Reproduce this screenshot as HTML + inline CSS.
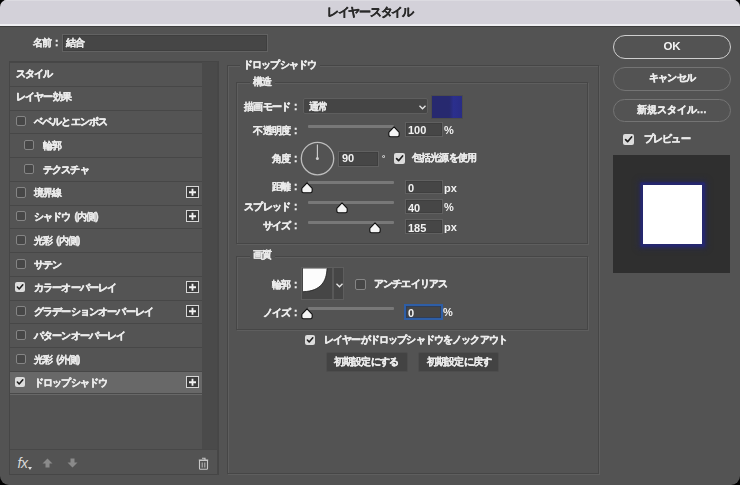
<!DOCTYPE html><html><head><meta charset="utf-8"><style>
*{box-sizing:border-box}
html,body{margin:0;padding:0;width:740px;height:485px;overflow:hidden;background:#000}
body{font-family:"Liberation Sans",sans-serif;color:#ebebeb;font-weight:bold}
.a{position:absolute}
#win{position:absolute;left:0;top:0;width:740px;height:485px;background:#535353;border-radius:7px 7px 9px 9px;overflow:hidden}
.t{position:absolute;white-space:nowrap;font-size:10px;line-height:12px;letter-spacing:-0.85px;-webkit-text-stroke-width:0.4px;will-change:transform}
.r{text-align:right}
.k{-webkit-text-stroke-width:0.15px}
.cb{position:absolute;width:10px;height:10px;border:1.4px solid #858585;background:#474747;border-radius:2px}
.cbc{position:absolute;width:11px;height:11px;background:#dcdcdc;border-radius:2px}
.plus{position:absolute;width:13px;height:12.5px;border:1.3px solid #d6d6d6;background:#3c3c3c}
.trk{position:absolute;left:308px;width:86px;height:2.5px;background:#787878;border-radius:1px}
.inp{position:absolute;background:#464646;border:1.3px solid #606060;box-shadow:inset 0 0 0 0.8px #3e3e3e}
.num{position:absolute;white-space:nowrap;font-size:11px;line-height:12px;color:#f2f2f2;will-change:transform}
.btn{position:absolute;left:613px;width:118px;height:23.8px;border-radius:12px;border:1.5px solid #747474}
</style></head><body><div id="win">
<div class="a" style="left:0;top:0;width:740px;height:24px;background:#d3d1d9;border-top:1px solid #dcdbe1"></div>
<div class="a" style="left:0;top:24px;width:740px;height:1.5px;background:#efeff2"></div>
<div class="a" style="left:0;top:25.5px;width:740px;height:1.5px;background:#3d3d3d"></div>
<div class="t" style="left:327px;top:6px;font-size:11.5px;letter-spacing:-1.3px;color:#2a2a2a;">レイヤースタイル</div>
<div class="t" style="left:33px;top:37px;"><span class="k">名前</span></div>
<div class="t" style="left:55px;top:37px;">:</div>
<div class="inp" style="left:61.5px;top:34px;width:206.5px;height:17.8px;border:1.6px solid #626262;box-shadow:inset 0 0 0 1px #3f3f3f"></div>
<div class="t" style="left:66px;top:36.5px;"><span class="k">結合</span></div>
<div class="a" style="left:9px;top:61px;width:210px;height:414px;border:1px solid #464646"></div>
<div class="a" style="left:201.5px;top:62px;width:15.5px;height:387px;background:#4a4a4a"></div>
<div class="a" style="left:217px;top:61px;width:1px;height:414px;background:#474747"></div>
<div class="a" style="left:10px;top:449px;width:207px;height:1px;background:#484848"></div>
<div class="a" style="left:10px;top:62.00px;width:191.5px;height:23.75px;background:#545454;border-top:1.3px solid #474747"></div>
<div class="t" style="left:16px;top:67.6px;">スタイル</div>
<div class="a" style="left:10px;top:85.75px;width:191.5px;height:23.75px;background:#545454;border-top:1.3px solid #474747"></div>
<div class="t" style="left:16px;top:91.35px;">レイヤー<span class="k">効果</span></div>
<div class="a" style="left:10px;top:109.50px;width:191.5px;height:23.75px;background:#545454;border-top:1.3px solid #474747"></div>
<div class="cb" style="left:15.6px;top:116.0px;width:10.4px;height:10.4px"></div>
<div class="t" style="left:34px;top:116.1px;">ベベルとエンボス</div>
<div class="a" style="left:10px;top:133.25px;width:191.5px;height:23.75px;background:#545454;border-top:1.3px solid #474747"></div>
<div class="cb" style="left:24.1px;top:139.75px;width:10.4px;height:10.4px"></div>
<div class="t" style="left:43px;top:139.85px;"><span class="k">輪郭</span></div>
<div class="a" style="left:10px;top:157.00px;width:191.5px;height:23.75px;background:#545454;border-top:1.3px solid #474747"></div>
<div class="cb" style="left:24.1px;top:163.5px;width:10.4px;height:10.4px"></div>
<div class="t" style="left:43px;top:163.6px;">テクスチャ</div>
<div class="a" style="left:10px;top:180.75px;width:191.5px;height:23.75px;background:#545454;border-top:1.3px solid #474747"></div>
<div class="cb" style="left:15.6px;top:187.25px;width:10.4px;height:10.4px"></div>
<div class="t" style="left:34px;top:187.35px;"><span class="k">境界線</span></div>
<div class="plus" style="left:186px;top:185.75px"></div>
<svg class="a" style="left:186px;top:185.75px" width="13" height="12.5" viewBox="0 0 13 12.5"><path d="M6.5 2.8 V9.7 M3 6.25 H10" stroke="#f0f0f0" stroke-width="1.8"/></svg>
<div class="a" style="left:10px;top:204.50px;width:191.5px;height:23.75px;background:#545454;border-top:1.3px solid #474747"></div>
<div class="cb" style="left:15.6px;top:211.0px;width:10.4px;height:10.4px"></div>
<div class="t" style="left:34px;top:211.1px;">シャドウ<span style="margin-left:2px"></span> (<span class="k">内側</span>)</div>
<div class="plus" style="left:186px;top:209.5px"></div>
<svg class="a" style="left:186px;top:209.5px" width="13" height="12.5" viewBox="0 0 13 12.5"><path d="M6.5 2.8 V9.7 M3 6.25 H10" stroke="#f0f0f0" stroke-width="1.8"/></svg>
<div class="a" style="left:10px;top:228.25px;width:191.5px;height:23.75px;background:#545454;border-top:1.3px solid #474747"></div>
<div class="cb" style="left:15.6px;top:234.75px;width:10.4px;height:10.4px"></div>
<div class="t" style="left:34px;top:234.85px;"><span class="k">光彩</span><span style="margin-left:2px"></span> (<span class="k">内側</span>)</div>
<div class="a" style="left:10px;top:252.00px;width:191.5px;height:23.75px;background:#545454;border-top:1.3px solid #474747"></div>
<div class="cb" style="left:15.6px;top:258.5px;width:10.4px;height:10.4px"></div>
<div class="t" style="left:34px;top:258.6px;">サテン</div>
<div class="a" style="left:10px;top:275.75px;width:191.5px;height:23.75px;background:#545454;border-top:1.3px solid #474747"></div>
<div class="cbc" style="left:15.3px;top:282.15000000000003px;width:10px;height:10px"></div>
<svg class="a" style="left:15.3px;top:282.15000000000003px" width="10" height="10" viewBox="0 0 11 11"><path d="M2.6 5.6 L4.6 7.7 L8.6 3" fill="none" stroke="#1e1e1e" stroke-width="1.7" stroke-linecap="round" stroke-linejoin="round"/></svg>
<div class="t" style="left:34px;top:282.35px;">カラーオーバーレイ</div>
<div class="plus" style="left:186px;top:280.75px"></div>
<svg class="a" style="left:186px;top:280.75px" width="13" height="12.5" viewBox="0 0 13 12.5"><path d="M6.5 2.8 V9.7 M3 6.25 H10" stroke="#f0f0f0" stroke-width="1.8"/></svg>
<div class="a" style="left:10px;top:299.50px;width:191.5px;height:23.75px;background:#545454;border-top:1.3px solid #474747"></div>
<div class="cb" style="left:15.6px;top:306.0px;width:10.4px;height:10.4px"></div>
<div class="t" style="left:34px;top:306.1px;">グラデーションオーバーレイ</div>
<div class="plus" style="left:186px;top:304.5px"></div>
<svg class="a" style="left:186px;top:304.5px" width="13" height="12.5" viewBox="0 0 13 12.5"><path d="M6.5 2.8 V9.7 M3 6.25 H10" stroke="#f0f0f0" stroke-width="1.8"/></svg>
<div class="a" style="left:10px;top:323.25px;width:191.5px;height:23.75px;background:#545454;border-top:1.3px solid #474747"></div>
<div class="cb" style="left:15.6px;top:329.75px;width:10.4px;height:10.4px"></div>
<div class="t" style="left:34px;top:329.85px;">パターンオーバーレイ</div>
<div class="a" style="left:10px;top:347.00px;width:191.5px;height:23.75px;background:#545454;border-top:1.3px solid #474747"></div>
<div class="cb" style="left:15.6px;top:353.5px;width:10.4px;height:10.4px"></div>
<div class="t" style="left:34px;top:353.6px;"><span class="k">光彩</span><span style="margin-left:2px"></span> (<span class="k">外側</span>)</div>
<div class="a" style="left:10px;top:370.75px;width:191.5px;height:23.75px;background:#686868;border-top:1.3px solid #474747"></div>
<div class="cbc" style="left:15.3px;top:377.15000000000003px;width:10px;height:10px"></div>
<svg class="a" style="left:15.3px;top:377.15000000000003px" width="10" height="10" viewBox="0 0 11 11"><path d="M2.6 5.6 L4.6 7.7 L8.6 3" fill="none" stroke="#1e1e1e" stroke-width="1.7" stroke-linecap="round" stroke-linejoin="round"/></svg>
<div class="t" style="left:34px;top:377.35px;">ドロップシャドウ</div>
<div class="plus" style="left:186px;top:375.75px"></div>
<svg class="a" style="left:186px;top:375.75px" width="13" height="12.5" viewBox="0 0 13 12.5"><path d="M6.5 2.8 V9.7 M3 6.25 H10" stroke="#f0f0f0" stroke-width="1.8"/></svg>
<div class="a" style="left:10px;top:393.2px;width:191.5px;height:1.3px;background:#4a4a4a"></div>
<div class="a" style="left:17.5px;top:455.5px;font-family:'Liberation Sans',sans-serif;font-style:italic;font-weight:normal;font-size:14px;line-height:14px;color:#d8d8d8;letter-spacing:-0.3px">fx</div>
<svg class="a" style="left:28px;top:467px" width="4" height="3"><path d="M0 0 H4 L2 3Z" fill="#ddd"/></svg>
<svg class="a" style="left:42px;top:458px" width="11" height="10" viewBox="0 0 11 10"><path d="M5.5 0.5 L10.5 5.5 H7.5 V9.5 H3.5 V5.5 H0.5Z" fill="#8a8a8a"/></svg>
<svg class="a" style="left:67px;top:458px" width="11" height="10" viewBox="0 0 11 10"><path d="M3.5 0.5 H7.5 V4.5 H10.5 L5.5 9.5 L0.5 4.5 H3.5Z" fill="#8a8a8a"/></svg>
<svg class="a" style="left:198px;top:456.5px" width="11" height="13" viewBox="0 0 11 13"><path d="M1.5 3.5 H9.5 V11.5 Q9.5 12.3 8.7 12.3 H2.3 Q1.5 12.3 1.5 11.5Z M4 1.2 H7 V3 M0.8 3 H10.2" fill="none" stroke="#c8c8c8" stroke-width="1.1"/><path d="M4.2 5.5 V10.5 M6.8 5.5 V10.5" stroke="#c8c8c8" stroke-width="0.9"/></svg>
<div class="a" style="left:226.5px;top:65px;width:372px;height:409px;border:1px solid #464646;box-shadow:1px 1px 0 #5e5e5e, inset 1px 1px 0 #5e5e5e"></div>
<div class="a" style="left:240px;top:57.5px;width:80px;height:14px;background:#535353"></div>
<div class="t" style="left:243px;top:58.5px;">ドロップシャドウ</div>
<div class="a" style="left:235.5px;top:82px;width:352.5px;height:161.5px;border:1px solid #464646;box-shadow:1px 1px 0 #5e5e5e, inset 1px 1px 0 #5e5e5e"></div>
<div class="a" style="left:250px;top:74.5px;width:25px;height:14px;background:#535353"></div>
<div class="t" style="left:253px;top:75.5px;"><span class="k">構造</span></div>
<div class="a" style="left:235.5px;top:255.5px;width:352.5px;height:74px;border:1px solid #464646;box-shadow:1px 1px 0 #5e5e5e, inset 1px 1px 0 #5e5e5e"></div>
<div class="a" style="left:250px;top:248px;width:25px;height:14px;background:#535353"></div>
<div class="t" style="left:253px;top:249px;"><span class="k">画質</span></div>
<div class="t r" style="left:170.0px;width:120px;top:101px"><span class="k">描画</span>モード</div>
<div class="t" style="left:293.7px;top:101px">:</div>
<div class="t r" style="left:170.0px;width:120px;top:124.5px"><span class="k">不透明度</span></div>
<div class="t" style="left:293.7px;top:124.5px">:</div>
<div class="t r" style="left:170.0px;width:120px;top:153.3px"><span class="k">角度</span></div>
<div class="t" style="left:293.7px;top:153.3px">:</div>
<div class="t r" style="left:170.0px;width:120px;top:181.4px"><span class="k">距離</span></div>
<div class="t" style="left:293.7px;top:181.4px">:</div>
<div class="t r" style="left:170.0px;width:120px;top:200.7px">スプレッド</div>
<div class="t" style="left:293.7px;top:200.7px">:</div>
<div class="t r" style="left:170.0px;width:120px;top:219.6px">サイズ</div>
<div class="t" style="left:293.7px;top:219.6px">:</div>
<div class="t r" style="left:170.0px;width:120px;top:279.3px"><span class="k">輪郭</span></div>
<div class="t" style="left:293.7px;top:279.3px">:</div>
<div class="t r" style="left:170.0px;width:120px;top:307.4px">ノイズ</div>
<div class="t" style="left:293.7px;top:307.4px">:</div>
<div class="a" style="left:302.5px;top:97.5px;width:125px;height:16.5px;background:#454545;border:1.4px solid #5e5e5e;border-radius:2px"></div>
<div class="t" style="left:309px;top:100.5px;"><span class="k">通常</span></div>
<svg class="a" style="left:418px;top:104px" width="9" height="7" viewBox="0 0 9 7"><path d="M1.5 1.8 L4.5 4.8 L7.5 1.8" fill="none" stroke="#e6e6e6" stroke-width="1.3"/></svg>
<div class="a" style="left:430.5px;top:95px;width:32px;height:23.5px;background:linear-gradient(to right,#27296f 0%,#27296f 58%,#2b2f8e 72%,#292c84 100%);border:1px solid #4c4c4c"></div>
<div class="trk" style="top:125.25px"></div>
<div class="trk" style="top:181.35px"></div>
<div class="trk" style="top:201.25px"></div>
<div class="trk" style="top:221.25px"></div>
<div class="trk" style="top:307.25px"></div>
<svg class="a" style="left:386.9px;top:125.0px" width="14" height="14" viewBox="0 0 14 14"><path d="M7 1.8 L12.2 7.4 V10 Q12.2 11.7 10.5 11.7 H3.5 Q1.8 11.7 1.8 10 V7.4 Z" fill="#f4f4f4" stroke="#111" stroke-width="1.15" stroke-linejoin="round"/></svg>
<svg class="a" style="left:299.9px;top:181.1px" width="14" height="14" viewBox="0 0 14 14"><path d="M7 1.8 L12.2 7.4 V10 Q12.2 11.7 10.5 11.7 H3.5 Q1.8 11.7 1.8 10 V7.4 Z" fill="#f4f4f4" stroke="#111" stroke-width="1.15" stroke-linejoin="round"/></svg>
<svg class="a" style="left:334.9px;top:201.0px" width="14" height="14" viewBox="0 0 14 14"><path d="M7 1.8 L12.2 7.4 V10 Q12.2 11.7 10.5 11.7 H3.5 Q1.8 11.7 1.8 10 V7.4 Z" fill="#f4f4f4" stroke="#111" stroke-width="1.15" stroke-linejoin="round"/></svg>
<svg class="a" style="left:367.59999999999997px;top:221.0px" width="14" height="14" viewBox="0 0 14 14"><path d="M7 1.8 L12.2 7.4 V10 Q12.2 11.7 10.5 11.7 H3.5 Q1.8 11.7 1.8 10 V7.4 Z" fill="#f4f4f4" stroke="#111" stroke-width="1.15" stroke-linejoin="round"/></svg>
<svg class="a" style="left:299.9px;top:307.0px" width="14" height="14" viewBox="0 0 14 14"><path d="M7 1.8 L12.2 7.4 V10 Q12.2 11.7 10.5 11.7 H3.5 Q1.8 11.7 1.8 10 V7.4 Z" fill="#f4f4f4" stroke="#111" stroke-width="1.15" stroke-linejoin="round"/></svg>
<div class="inp" style="left:404.5px;top:121.5px;width:38px;height:15.8px"></div>
<div class="num" style="left:408.0px;top:124.4px">100</div>
<div class="num" style="left:443.5px;top:123.80000000000001px">%</div>
<div class="inp" style="left:338px;top:150.5px;width:41px;height:16.2px"></div>
<div class="num" style="left:341.5px;top:152.4px">90</div>
<div class="num" style="left:381.5px;top:152.5px;font-size:8px">°</div>
<div class="inp" style="left:404.5px;top:179.7px;width:38px;height:14.8px"></div>
<div class="num" style="left:408.0px;top:182.1px">0</div>
<div class="num" style="left:443.5px;top:181.5px">px</div>
<div class="inp" style="left:404.5px;top:199.4px;width:38px;height:14.8px"></div>
<div class="num" style="left:408.0px;top:201.8px">40</div>
<div class="num" style="left:443.5px;top:201.20000000000002px">%</div>
<div class="inp" style="left:404.5px;top:219.2px;width:38px;height:14.8px"></div>
<div class="num" style="left:408.0px;top:221.6px">185</div>
<div class="num" style="left:443.5px;top:221.0px">px</div>
<div class="a" style="left:403.7px;top:303.7px;width:39.7px;height:16.6px;background:#454545;border:2px solid #2e5ea6;box-shadow:inset 0 0 0 0.8px #2b3d5c"></div>
<div class="num" style="left:408.2px;top:307.0px">0</div>
<div class="num" style="left:443.4px;top:306.4px">%</div>
<svg class="a" style="left:299px;top:140px" width="37" height="37" viewBox="0 0 37 37"><circle cx="18.5" cy="18.6" r="16.2" fill="none" stroke="#bdbdbd" stroke-width="1.3"/><path d="M18.4 18.6 V4.4" stroke="#cfcfcf" stroke-width="1.1"/><circle cx="18.4" cy="18.6" r="1.5" fill="#cfcfcf"/></svg>
<div class="cbc" style="left:393.7px;top:153.3px;width:11px;height:11px"></div>
<svg class="a" style="left:393.7px;top:153.3px" width="11" height="11" viewBox="0 0 11 11"><path d="M2.6 5.6 L4.6 7.7 L8.6 3" fill="none" stroke="#1e1e1e" stroke-width="1.7" stroke-linecap="round" stroke-linejoin="round"/></svg>
<div class="t" style="left:411.5px;top:152.3px;"><span class="k">包括光源</span>を<span class="k">使用</span></div>
<div class="a" style="left:300.8px;top:266.8px;width:43.6px;height:33.2px;background:#464646;border:1.3px solid #5e5e5e"></div>
<svg class="a" style="left:302px;top:268px" width="32" height="32" viewBox="0 0 32 32"><path d="M1 0.6 H25 C24.6 13 19 23.2 1 23.7 Z" fill="#fcfcfc"/><path d="M25 0.6 C24.6 13 19 23.2 1 23.7" fill="none" stroke="#1c1c1c" stroke-width="0.8"/></svg>
<div class="a" style="left:332.3px;top:268px;width:2px;height:30.8px;background:#585858"></div>
<svg class="a" style="left:334.6px;top:281.5px" width="9" height="7" viewBox="0 0 9 7"><path d="M1.5 1.8 L4.5 4.8 L7.5 1.8" fill="none" stroke="#e6e6e6" stroke-width="1.3"/></svg>
<div class="cb" style="left:355px;top:279.2px;width:10.5px;height:10.5px"></div>
<div class="t" style="left:374px;top:278px;">アンチエイリアス</div>
<div class="cbc" style="left:305.3px;top:335.3px;width:10px;height:10px"></div>
<svg class="a" style="left:305.3px;top:335.3px" width="10" height="10" viewBox="0 0 11 11"><path d="M2.6 5.6 L4.6 7.7 L8.6 3" fill="none" stroke="#1e1e1e" stroke-width="1.7" stroke-linecap="round" stroke-linejoin="round"/></svg>
<div class="t" style="left:324px;top:333.6px;">レイヤーがドロップシャドウをノックアウト</div>
<div class="a" style="left:325.5px;top:351.5px;width:82px;height:20.7px;background:#434343;border:1px solid #4d4d4d;border-radius:2px"></div>
<div class="t" style="left:334px;top:355.8px;"><span class="k">初期設定</span>にする</div>
<div class="a" style="left:418px;top:351.5px;width:80.5px;height:20.7px;background:#434343;border:1px solid #4d4d4d;border-radius:2px"></div>
<div class="t" style="left:427px;top:355.8px;"><span class="k">初期設定</span>に<span class="k">戻</span>す</div>
<div class="btn" style="top:34.8px;border:1.8px solid #cfcfcf"></div>
<div class="num" style="left:613px;width:118px;text-align:center;top:39.6px;font-size:11.5px;color:#f4f4f4">OK</div>
<div class="btn" style="top:67px"></div>
<div class="t" style="left:613px;width:118px;text-align:center;top:72.2px;">キャンセル</div>
<div class="btn" style="top:98.7px"></div>
<div class="t" style="left:636.5px;top:104px;letter-spacing:-0.1px"><span class="k">新規</span>スタイル</div>
<div class="t" style="left:697px;top:104px;letter-spacing:0.5px">...</div>
<div class="cbc" style="left:622.8px;top:133.5px;width:11px;height:11px"></div>
<svg class="a" style="left:622.8px;top:133.5px" width="11" height="11" viewBox="0 0 11 11"><path d="M2.6 5.6 L4.6 7.7 L8.6 3" fill="none" stroke="#1e1e1e" stroke-width="1.7" stroke-linecap="round" stroke-linejoin="round"/></svg>
<div class="t" style="left:644px;top:133.3px;">プレビュー</div>
<div class="a" style="left:613.3px;top:155px;width:117.2px;height:117.6px;background:#2f2f2f"></div>
<div class="a" style="left:642.8px;top:184.8px;width:59.1px;height:58.8px;background:#fff;box-shadow:0 0 0 2.5px #25276e, 0 0 3px 3.5px rgba(38,40,112,0.85), 0 0 6px 5px rgba(38,40,100,0.4)"></div>
</div></body></html>
